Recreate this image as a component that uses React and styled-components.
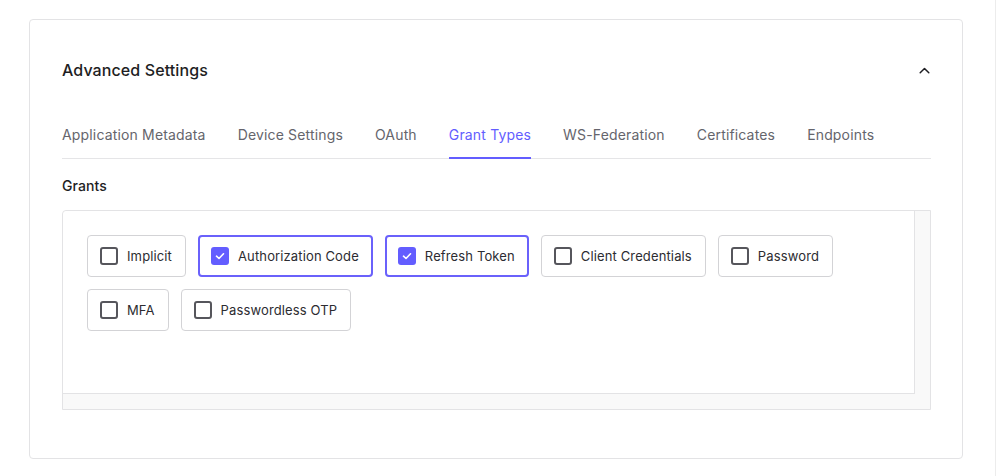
import React, { useState } from 'react';
import styled, { createGlobalStyle } from 'styled-components';

const GlobalStyle = createGlobalStyle`
  * { box-sizing: border-box; }
  body {
    margin: 0;
    background: #ffffff;
    font-family: 'Inter', 'Noto Sans', sans-serif;
    -webkit-font-smoothing: antialiased;
  }
`;

const Page = styled.div`
  width: 996px;
  height: 476px;
  padding: 19px 0 0 29px;
  border-right: 1px solid #ececec;
  overflow: hidden;
`;

const Card = styled.section`
  width: 934px;
  height: 440px;
  border: 1px solid #e3e3e5;
  border-radius: 4px;
  padding: 38px 31px 0 32px;
`;

const Header = styled.div`
  display: flex;
  align-items: center;
  justify-content: space-between;
  height: 24px;
`;

const Title = styled.h2`
  margin: 0;
  font-size: 16px;
  line-height: 24px;
  font-weight: 500;
  letter-spacing: 0.1px;
  color: #1e1e23;
`;

const Toggle = styled.button`
  display: flex;
  align-items: center;
  justify-content: center;
  width: 14px;
  height: 14px;
  padding: 0;
  border: none;
  background: none;
  color: #1e1e23;
  cursor: pointer;
`;

const TabList = styled.div`
  display: flex;
  gap: 32px;
  margin-top: 43px;
  border-bottom: 1px solid #e5e5e7;
`;

const Tab = styled.button`
  padding: 0 0 12px;
  margin-bottom: -1px;
  border: none;
  border-bottom: 2px solid ${p => (p.$active ? '#635dff' : 'transparent')};
  background: none;
  font-family: inherit;
  font-size: 14px;
  line-height: 20px;
  letter-spacing: 0.16px;
  color: ${p => (p.$active ? '#635dff' : '#65656c')};
  cursor: pointer;
`;

const Label = styled.div`
  margin-top: 17px;
  font-size: 14px;
  line-height: 20px;
  font-weight: 500;
  letter-spacing: 0.1px;
  color: #1e1e23;
`;

const ScrollBox = styled.div`
  margin-top: 14px;
  height: 200px;
  border: 1px solid #e3e3e5;
  border-radius: 4px 0 0 0;
  background: #f9f9f9;
  padding: 0 15px 15px 0;
`;

const Viewport = styled.div`
  height: 100%;
  background: #ffffff;
  border-right: 1px solid #e3e3e5;
  border-bottom: 1px solid #e3e3e5;
  border-radius: 4px 0 0 0;
  padding: 24px;
  display: flex;
  flex-wrap: wrap;
  align-content: flex-start;
  gap: 12px;
`;

const Chip = styled.label`
  display: flex;
  align-items: center;
  gap: 9px;
  height: 42px;
  padding: 0 ${p => (p.$checked ? 12 : 13)}px 0 ${p => (p.$checked ? 11 : 12)}px;
  border: ${p => (p.$checked ? '2px solid #6a61fb' : '1px solid #d3d3d6')};
  border-radius: 4px;
  font-size: 13px;
  letter-spacing: 0.13px;
  color: #2c2c31;
  cursor: pointer;
  user-select: none;
`;

const Box = styled.span`
  display: flex;
  align-items: center;
  justify-content: center;
  width: 18px;
  height: 18px;
  border-radius: 3px;
  border: ${p => (p.$checked ? 'none' : '2px solid #56565c')};
  background: ${p => (p.$checked ? '#635dff' : '#ffffff')};
`;

const grants = [
  { name: 'Implicit', on: false },
  { name: 'Authorization Code', on: true },
  { name: 'Refresh Token', on: true },
  { name: 'Client Credentials', on: false },
  { name: 'Password', on: false },
  { name: 'MFA', on: false },
  { name: 'Passwordless OTP', on: false },
];

const tabs = [
  'Application Metadata',
  'Device Settings',
  'OAuth',
  'Grant Types',
  'WS-Federation',
  'Certificates',
  'Endpoints',
];

const Check = () => (
  <svg width="12" height="12" viewBox="0 0 12 12" fill="none">
    <path d="M2.5 6.2 L5 8.5 L9.5 3.8" stroke="#fff" strokeWidth="1.6" strokeLinecap="round" strokeLinejoin="round" />
  </svg>
);

const App = () => {
  const [state, setState] = useState(grants.map(g => g.on));
  const [active, setActive] = useState('Grant Types');

  return (
    <Page>
      <GlobalStyle />
      <Card>
        <Header>
          <Title>Advanced Settings</Title>
          <Toggle aria-label="Collapse">
            <svg width="11" height="7" viewBox="0 0 11 7" fill="none">
              <path d="M1.2 5.8 L5.5 1.5 L9.8 5.8" stroke="currentColor" strokeWidth="1.5" strokeLinecap="round" strokeLinejoin="round" />
            </svg>
          </Toggle>
        </Header>

        <TabList>
          {tabs.map(t => (
            <Tab key={t} $active={t === active} onClick={() => setActive(t)}>{t}</Tab>
          ))}
        </TabList>

        <Label>Grants</Label>

        <ScrollBox>
          <Viewport>
            {grants.map((g, i) => (
              <Chip
                key={g.name}
                $checked={state[i]}
                onClick={() => setState(s => s.map((v, j) => (j === i ? !v : v)))}
              >
                <Box $checked={state[i]}>{state[i] && <Check />}</Box>
                {g.name}
              </Chip>
            ))}
          </Viewport>
        </ScrollBox>
      </Card>
    </Page>
  );
};

export default App;
